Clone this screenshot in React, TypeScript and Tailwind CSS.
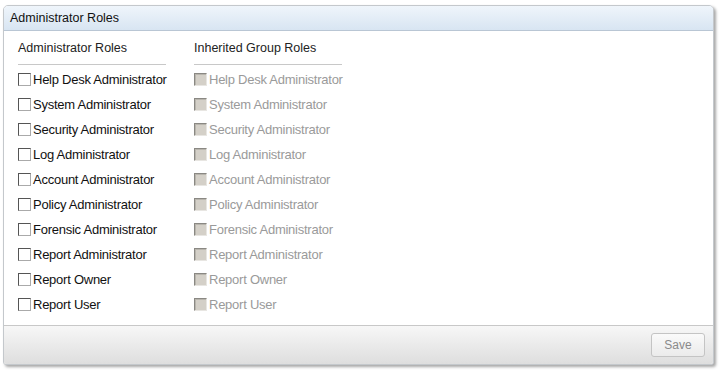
import React from "react";

const roles = [
    "Help Desk Administrator",
    "System Administrator",
    "Security Administrator",
    "Log Administrator",
    "Account Administrator",
    "Policy Administrator",
    "Forensic Administrator",
    "Report Administrator",
    "Report Owner",
    "Report User",
];

const Box = ({disabled}: {disabled?: boolean}) => (
    <span
        className={
            disabled
                ? "w-[13px] h-[13px] shrink-0 border border-t-[#8a8883] border-l-[#8a8883] border-r-[#e8e6e2] border-b-[#e8e6e2] bg-[#d4d0c8] shadow-[inset_1px_1px_0_#b8b5ad]"
                : "w-[13px] h-[13px] shrink-0 border border-t-[#555] border-l-[#555] border-r-[#aaa] border-b-[#aaa] bg-white"
        }
    />
);

const RoleColumn = ({title, disabled}: {title: string; disabled?: boolean}) => (
    <div className="w-[148px]">
        <div className="text-[12.5px] text-[#222] h-[17px] leading-[17px]">{title}</div>
        <div className="mt-[7px] border-t border-[#c8c8c8]" />
        <div className="mt-[2px] flex flex-col">
            {roles.map((r) => (
                <label key={r} className="flex items-center gap-[2px] h-[25px] whitespace-nowrap">
                    <Box disabled={disabled} />
                    <span className={`text-[13px] tracking-[-0.25px] ${disabled ? "text-[#9a9a9a]" : "text-[#111]"}`}>{r}</span>
                </label>
            ))}
        </div>
    </div>
);

export default function App() {
    return (
        <div className="w-[721px] h-[373px] bg-white pt-[5px] pl-[3px]" style={{fontFamily: '"Liberation Sans", Arial, sans-serif'}}>
            <div className="w-[711px] h-[360px] flex flex-col border border-[#c4c8cc] rounded-t-[5px] rounded-b-[3px] bg-white shadow-[2px_2px_3px_rgba(0,0,0,0.35)] overflow-hidden">
                <div className="h-[25px] shrink-0 bg-gradient-to-b from-[#eff5fb] to-[#d8e5f2] border-b border-[#b9c6d4] flex items-center px-[6px] text-[12.5px] text-[#111]">
                    Administrator Roles
                </div>
                <div className="flex-1 flex gap-[28px] pl-[14px] pt-[9px]">
                    <RoleColumn title="Administrator Roles" />
                    <RoleColumn title="Inherited Group Roles" disabled />
                </div>
                <div className="h-[39px] shrink-0 border-t border-[#c8c8c8] bg-gradient-to-b from-[#f7f7f7] to-[#dedede] flex items-center justify-end pr-[8px]">
                    <button className="w-[54px] h-[24px] rounded-[3px] border border-[#c4c4c4] bg-gradient-to-b from-[#fafafa] to-[#ebebeb] text-[12px] text-[#8a8a8a]">
                        Save
                    </button>
                </div>
            </div>
        </div>
    );
}
